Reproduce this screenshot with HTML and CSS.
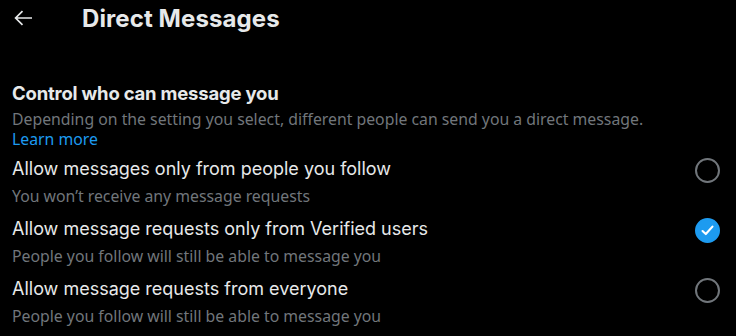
FILE: index.html
```html
<!DOCTYPE html>
<html>
<head>
<meta charset="utf-8">
<link rel="stylesheet" href="styles.css">
</head>
<body>
<div class="page">
  <header class="header">
    <div class="back">
      <svg viewBox="0 0 24 24" width="24" height="24"><path fill="none" stroke="#e7e9ea" stroke-width="1.7" d="M21 12H5M11.5 5.2L4.6 12l6.9 6.8"/></svg>
    </div>
    <h1 class="title">Direct Messages</h1>
  </header>
  <section class="section">
    <h2 class="heading">Control who can message you</h2>
    <p class="desc">Depending on the setting you select, different people can send you a direct message.</p>
    <a class="link">Learn more</a>
    <div class="options">
      <div class="option">
        <div class="texts">
          <div class="label">Allow messages only from people you follow</div>
          <div class="sub">You won’t receive any message requests</div>
        </div>
        <span class="radio"></span>
      </div>
      <div class="option">
        <div class="texts">
          <div class="label">Allow message requests only from Verified users</div>
          <div class="sub">People you follow will still be able to message you</div>
        </div>
        <span class="radio checked">
          <svg viewBox="0 0 24 24" width="17" height="17"><path fill="none" stroke="#fff" stroke-width="3" stroke-linecap="round" stroke-linejoin="round" d="M5 12.8l4.6 4.2L19 6.5"/></svg>
        </span>
      </div>
      <div class="option">
        <div class="texts">
          <div class="label">Allow message requests from everyone</div>
          <div class="sub">People you follow will still be able to message you</div>
        </div>
        <span class="radio"></span>
      </div>
    </div>
  </section>
</div>
</body>
</html>
```
FILE: styles.css
```css
html, body {
  margin: 0;
  padding: 0;
  background: #000;
}
.page {
  width: 736px;
  height: 336px;
  overflow: hidden;
  font-family: "Inter", "Noto Sans", sans-serif;
  color: #e7e9ea;
}
.header {
  display: flex;
  align-items: center;
  height: 36px;
  padding-left: 11px;
}
.back {
  width: 24px;
  height: 24px;
  display: flex;
  margin-right: 47px;
}
.title {
  margin: 0;
  font-size: 24px;
  font-weight: 700;
  letter-spacing: 0.1px;
}
.section {
  padding: 46px 16px 0 12px;
}
.heading {
  margin: 0;
  font-size: 18.5px;
  font-weight: 700;
  line-height: 23px;
  letter-spacing: -0.2px;
}
.desc {
  margin: 4px 0 0;
  font-family: "Noto Sans", sans-serif;
  font-size: 15.8px;
  line-height: 20px;
  color: #71767b;
}
.link {
  display: block;
  font-family: "Noto Sans", sans-serif;
  font-size: 15.8px;
  line-height: 20px;
  color: #1d9bf0;
}
.options {
  display: flex;
  flex-direction: column;
  padding-top: 9px;
}
.option {
  display: flex;
  align-items: flex-start;
  justify-content: space-between;
  height: 60px;
}
.label {
  font-size: 18px;
  line-height: 22px;
}
.sub {
  margin-top: 6px;
  font-family: "Noto Sans", sans-serif;
  font-size: 15.8px;
  line-height: 20px;
  color: #71767b;
}
.radio {
  box-sizing: border-box;
  width: 25px;
  height: 25px;
  border: 2px solid #71767b;
  border-radius: 50%;
  margin-top: 0;
  display: flex;
  align-items: center;
  justify-content: center;
}
.radio.checked {
  background: #1d9bf0;
  border-color: #1d9bf0;
}
```
